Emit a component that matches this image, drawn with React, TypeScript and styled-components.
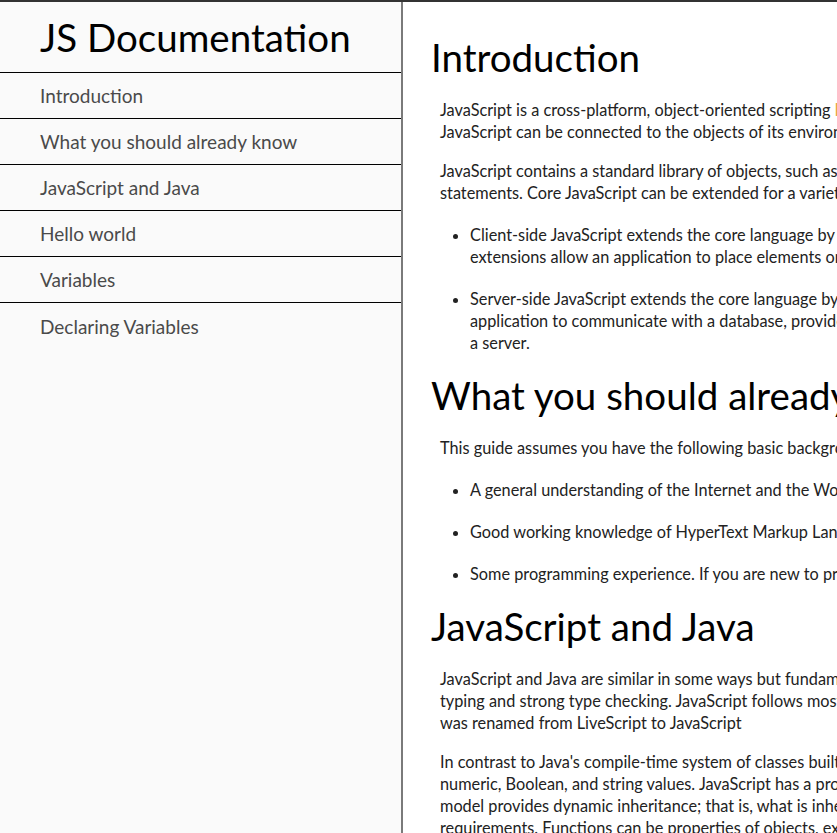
import React from "react";
import styled, { createGlobalStyle } from "styled-components";

const Global = createGlobalStyle`
  html, body { margin: 0; padding: 0; }
  body {
    font-family: "Lato", "Liberation Sans", sans-serif;
    background: #ffffff;
    color: #222;
    border-top: 2px solid #333;
  }
  * { box-sizing: border-box; }
`;

const Page = styled.div`
  display: flex;
  height: 831px;
  overflow: hidden;
`;

const Sidebar = styled.nav`
  flex: 0 0 403px;
  background: #fafafa;
  border-right: 2px solid #7a7a7a;
  display: flex;
  flex-direction: column;
`;

const Title = styled.header`
  height: 71px;
  padding: 0 0 0 40px;
  display: flex;
  align-items: center;
  font-size: 38.5px;
  color: #000;
  border-bottom: 1px solid #000;
  margin: 0;
`;

const NavList = styled.ul`
  list-style: none;
  margin: 0;
  padding: 0;
`;

const NavItem = styled.li<{ $last?: boolean }>`
  height: 46px;
  display: flex;
  align-items: center;
  padding-left: 40px;
  font-size: 19px;
  color: #4a4a4a;
  border-bottom: ${(p) => (p.$last ? "none" : "1px solid #000")};
`;

const Main = styled.main`
  flex: 1;
  min-width: 0;
  padding: 32px 0 0 28px;
  overflow: hidden;
`;

const Section = styled.section`
  white-space: nowrap;
`;

const Heading = styled.h1`
  font-size: 38.5px;
  line-height: 46px;
  font-weight: 400;
  color: #000;
  margin: 0 0 19px;
`;

const Para = styled.p`
  font-size: 16.3px;
  line-height: 22px;
  margin: 0 0 17px 9px;
  color: #222;
`;

const List = styled.ul`
  margin: 20px 0 18px 9px;
  padding: 0 0 0 30px;
  font-size: 16.3px;
  line-height: 22px;
  color: #222;
`;

const Item = styled.li`
  & + & {
    margin-top: 20px;
  }
`;

const Mark = styled.span`
  color: #e8a23c;
`;

const navItems = [
  "Introduction",
  "What you should already know",
  "JavaScript and Java",
  "Hello world",
  "Variables",
  "Declaring Variables",
];

export default function App() {
  return (
    <>
      <Global />
      <Page>
        <Sidebar>
          <Title>JS Documentation</Title>
          <NavList>
            {navItems.map((n, i) => (
              <NavItem key={n} $last={i === navItems.length - 1}>
                {n}
              </NavItem>
            ))}
          </NavList>
        </Sidebar>
        <Main>
          <Section>
            <Heading>Introduction</Heading>
            <Para>
              JavaScript is a cross-platform, object-oriented scripting <Mark>language</Mark>. It is a small and lightweight language. Inside a host environment (for example, a web browser),
              <br />
              JavaScript can be connected to the objects of its environment to provide programmatic control over them.
            </Para>
            <Para>
              JavaScript contains a standard library of objects, such as Array, Date, and Math, and a core set of language elements such as operators, control structures, and
              <br />
              statements. Core JavaScript can be extended for a variety of purposes by supplementing it with additional objects; for example:
            </Para>
            <List>
              <Item>
                Client-side JavaScript extends the core language by supplying objects to control a browser and its Document Object Model (DOM). For example, client-side
                <br />
                extensions allow an application to place elements on an HTML form and respond to user events such as mouse clicks, form input, and page navigation.
              </Item>
              <Item>
                Server-side JavaScript extends the core language by supplying objects relevant to running JavaScript on a server. For example, server-side extensions allow an
                <br />
                application to communicate with a database, provide continuity of information from one invocation to another of the application, or perform file manipulations on
                <br />
                a server.
              </Item>
            </List>
          </Section>
          <Section>
            <Heading>What you should already know</Heading>
            <Para>This guide assumes you have the following basic background:</Para>
            <List>
              <Item>A general understanding of the Internet and the World Wide Web (WWW).</Item>
              <Item>Good working knowledge of HyperText Markup Language (HTML).</Item>
              <Item>Some programming experience. If you are new to programming, try one of the tutorials linked on the main page about JavaScript.</Item>
            </List>
          </Section>
          <Section>
            <Heading>JavaScript and Java</Heading>
            <Para>
              JavaScript and Java are similar in some ways but fundamentally different in some others. The JavaScript language resembles Java but does not have Java's static
              <br />
              typing and strong type checking. JavaScript follows most Java expression syntax, naming conventions and basic control-flow constructs which was the reason why it
              <br />
              was renamed from LiveScript to JavaScript
            </Para>
            <Para>
              In contrast to Java's compile-time system of classes built by declarations, JavaScript supports a runtime system based on a small number of data types representing
              <br />
              numeric, Boolean, and string values. JavaScript has a prototype-based object model instead of the more common class-based object model. The prototype-based
              <br />
              model provides dynamic inheritance; that is, what is inherited can vary for individual objects. JavaScript also supports functions without any special declarative
              <br />
              requirements. Functions can be properties of objects, executing as loosely typed methods.
            </Para>
          </Section>
        </Main>
      </Page>
    </>
  );
}
